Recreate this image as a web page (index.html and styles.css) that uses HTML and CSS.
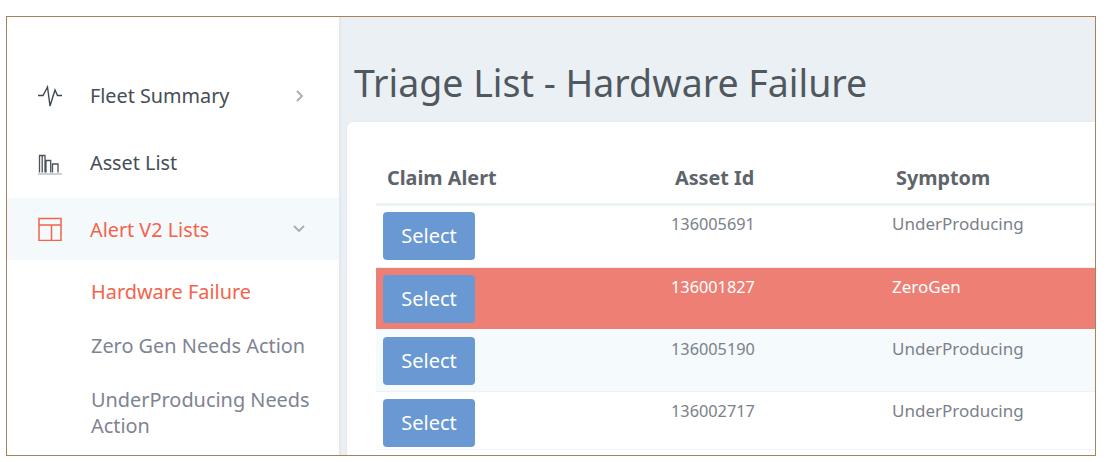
FILE: index.html
```html
<!DOCTYPE html>
<html lang="en">
<head>
    <meta charset="UTF-8">
    <meta name="viewport" content="width=device-width, initial-scale=1.0">
    <title>Triage List - Hardware Failure</title>
    <link rel="stylesheet" href="styles.css">
</head>
<body>
    <div class="frame">
        <nav class="sidebar">
            <a class="nav-item">
                <svg class="nav-icon" viewBox="0 0 24 24" fill="none" stroke="#3f4750" stroke-width="1.4">
                    <path d="M0 11.500h5l4.500-8.500 2.500 19 5-16 2.500 5.500h4.500"/>
                </svg>
                <span class="nav-label">Fleet Summary</span>
                <svg class="nav-arrow" viewBox="0 0 10 14" fill="none" stroke="#a4acb4" stroke-width="1.800">
                    <path d="M2 2l5 5-5 5"/>
                </svg>
            </a>
            <a class="nav-item">
                <svg class="nav-icon" viewBox="0 0 24 24" fill="none" stroke="#4a525a" stroke-width="1.300">
                    <path d="M1.500 21.500V4.500H7v17M4.200 4.500v17M8 21.500V9.500h4.700v12M14.500 21.500V13H20v8.500"/>
                    <path d="M0 23h24" stroke="#9aa2aa" stroke-width="1"/>
                </svg>
                <span class="nav-label">Asset List</span>
            </a>
            <a class="nav-item active">
                <svg class="nav-icon" viewBox="0 0 24 24" fill="none" stroke="#f4634a" stroke-width="1.500">
                    <path d="M1 1.500h22v22H1zM1 8h22M13.500 8v15.500"/>
                </svg>
                <span class="nav-label">Alert V2 Lists</span>
                <svg class="nav-arrow down" viewBox="0 0 14 10" fill="none" stroke="#a4acb4" stroke-width="1.800">
                    <path d="M2 2l5 5 5-5"/>
                </svg>
            </a>
            <ul class="sub-list">
                <li class="sub-item current">Hardware Failure</li>
                <li class="sub-item">Zero Gen Needs Action</li>
                <li class="sub-item">UnderProducing Needs Action</li>
            </ul>
        </nav>
        <main class="content">
            <h1 class="page-title">Triage List - Hardware Failure</h1>
            <section class="card">
                <table class="triage">
                    <thead>
                        <tr>
                            <th class="col-claim">Claim Alert</th>
                            <th class="col-asset">Asset Id</th>
                            <th class="col-symptom">Symptom</th>
                        </tr>
                    </thead>
                    <tbody>
                        <tr>
                            <td><button class="select-btn">Select</button></td>
                            <td>136005691</td>
                            <td class="symptom">UnderProducing</td>
                        </tr>
                        <tr class="zero-gen">
                            <td><button class="select-btn">Select</button></td>
                            <td>136001827</td>
                            <td class="symptom">ZeroGen</td>
                        </tr>
                        <tr class="tinted">
                            <td><button class="select-btn">Select</button></td>
                            <td>136005190</td>
                            <td class="symptom">UnderProducing</td>
                        </tr>
                        <tr class="last">
                            <td><button class="select-btn">Select</button></td>
                            <td>136002717</td>
                            <td class="symptom">UnderProducing</td>
                        </tr>
                    </tbody>
                </table>
            </section>
        </main>
    </div>
</body>
</html>
```

FILE: styles.css
```css
* {
    margin: 0;
    padding: 0;
    box-sizing: border-box;
}

body {
    background: #fff;
    font-family: "Noto Sans", "Open Sans", sans-serif;
}

.frame {
    display: flex;
    width: 1090px;
    height: 440px;
    margin: 16px 0 0 6px;
    border: 1px solid #a5845c;
    overflow: hidden;
}

/* sidebar */
.sidebar {
    flex: 0 0 332px;
    padding-top: 45px;
    background: #fff;
}

.nav-item {
    display: flex;
    align-items: center;
    height: 67px;
    padding: 0 33px 0 31px;
    color: #454d56;
    font-size: 19.800px;
}

.nav-item.active {
    height: 62px;
    margin-top: 2px;
    background: #f4f9fc;
    color: #f4634a;
}

.nav-icon {
    flex: 0 0 24px;
    width: 24px;
    height: 24px;
}

.nav-label {
    flex: 1;
    margin-left: 28px;
}

.nav-arrow {
    width: 10px;
    height: 14px;
    margin-right: 1px;
}

.nav-arrow.down {
    width: 14px;
    height: 10px;
    margin-right: 0;
}

.sub-list {
    list-style: none;
    padding: 19px 20px 0 84px;
}

.sub-item {
    margin-bottom: 28px;
    color: #7e8492;
    font-size: 19.900px;
    line-height: 26px;
}

.sub-item.current {
    color: #f4634a;
}

/* main area */
.content {
    flex: 1;
    min-width: 0;
    padding: 41px 0 0 8px;
    background: #ebf0f4;
    box-shadow: inset 3px 0 3px -1px #e2e7ec;
}

.page-title {
    height: 64px;
    padding-left: 7px;
    color: #50585f;
    font-size: 37.500px;
    font-weight: 400;
    line-height: 50px;
}

.card {
    height: 340px;
    padding: 32px 0 0 29px;
    background: #fff;
    border-radius: 6px 0 0 0;
    box-shadow: 0 0 3px #dde3e8;
}

.triage {
    width: 719px;
    border-collapse: separate;
    border-spacing: 0;
    table-layout: fixed;
}

.col-claim {
    width: 291px;
}

.col-asset {
    width: 221px;
}

.triage th {
    height: 52px;
    padding: 0 0 2px 8px;
    border-bottom: 3px solid #edf2f5;
    color: #5e646b;
    font-size: 19.800px;
    font-weight: 700;
    text-align: left;
}

.triage th.col-claim {
    padding-left: 11px;
}

.triage td {
    height: 62px;
    padding: 6px 0 0 4px;
    border-bottom: 1px solid #eef2f5;
    color: #7b818b;
    font-size: 16.300px;
    line-height: 24px;
    vertical-align: top;
}

.triage td:first-child {
    padding-left: 7px;
}

.triage td.symptom {
    font-size: 17px;
}

.triage .zero-gen td {
    height: 61px;
    padding-top: 7px;
    background: #ee7f75;
    border-bottom: 0;
    color: #fff;
}

.triage .tinted td {
    height: 63px;
    padding-top: 8px;
    background: #f5fafc;
}

.triage .last td {
    height: 58px;
    padding-top: 7px;
}

.select-btn {
    display: block;
    width: 92px;
    height: 48px;
    padding-bottom: 2px;
    background: #6a98d2;
    border: none;
    border-radius: 4px;
    color: #fff;
    font-family: inherit;
    font-size: 20px;
}
```
